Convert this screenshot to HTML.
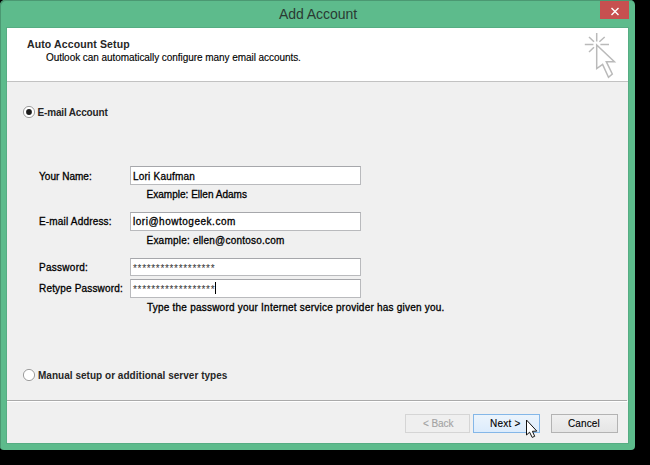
<!DOCTYPE html>
<html><head><meta charset="utf-8">
<style>
html,body{margin:0;padding:0;background:#000;}
body{width:650px;height:465px;position:relative;overflow:hidden;font-family:"Liberation Sans",sans-serif;}
.a{position:absolute;white-space:pre;-webkit-text-stroke:0.3px currentColor;}
.bd{-webkit-text-stroke:0;}
.lt{-webkit-text-stroke:0.12px currentColor;}
.r{position:absolute;}
#win{left:0;top:0;width:635px;height:450px;background:#5dbb8c;border-radius:5px 5px 4px 4px;box-shadow:inset 1px 1px 0 #4b9872;}
#topline{left:2px;top:0;width:630px;height:1px;background:#4b9872;}
#leftline{left:0;top:2px;width:1px;height:446px;background:#4b9872;}
#close{left:600px;top:1px;width:29px;height:18px;background:#c75050;}
#clientborder{left:6px;top:27px;width:623px;height:417px;background:#56ad83;}
#client{left:7px;top:28px;width:621px;height:415px;background:#f0f0f0;}
#header{left:7px;top:28px;width:621px;height:53px;background:#fff;}
#hline{left:7px;top:81px;width:621px;height:1px;background:#c2c2c2;}
#fline{left:7px;top:400px;width:620px;height:1px;background:#aaaaaa;}
#fline2{left:7px;top:401px;width:621px;height:1px;background:#fff;}
.box{position:absolute;left:130px;width:228.5px;height:16px;background:#fff;border:1px solid #b9babd;border-top-color:#a6a7ab;}
.btn{position:absolute;top:414px;height:17px;border:1px solid #b3b3b3;background:#e5e5e5;}
</style></head>
<body>
<div class="r" id="win"></div>
<div class="r" id="close"><svg width="29" height="18" style="position:absolute;left:0;top:0"><path d="M11.5 7 L18.5 14 M18.5 7 L11.5 14" stroke="#fff" stroke-width="1.4"/></svg></div>
<div class="r" id="clientborder"></div>
<div class="r" id="client"></div>
<div class="r" id="header"></div>
<div class="r" id="hline"></div>
<svg style="position:absolute;left:580px;top:30px" width="40" height="50" viewBox="0 0 40 50">
<g stroke="#bababa" stroke-width="1.5" fill="none">
<path d="M16.7 3 V11.5 M4.8 14.5 H13.4 M20.4 14.5 H29 M9 7 L14 11.8 M24.7 7 L19.4 11.8 M14 17.2 L9 22"/>
<path d="M16.7 15 V38.5 L22.6 34.4 L28.5 47.3 L32.3 44 L26.3 31.7 L34.4 31.7 Z" stroke-linejoin="miter"/>
</g></svg>
<svg style="position:absolute;left:22px;top:105px" width="14" height="14" viewBox="0 0 14 14">
<circle cx="7" cy="7" r="5.6" fill="#fff" stroke="#939393" stroke-width="0.9"/>
<circle cx="7" cy="7" r="2.9" fill="#1c1c1c"/>
</svg>
<div class="box" style="top:166px;height:17px"></div>
<div class="box" style="top:212px;height:17px"></div>
<div class="box" style="top:258px;height:16px"></div>
<div class="box" style="top:279px;height:16.5px"></div>
<div class="r" style="left:215px;top:282px;width:1px;height:12px;background:#000"></div>
<svg style="position:absolute;left:22px;top:368px" width="14" height="14" viewBox="0 0 14 14">
<circle cx="7" cy="7" r="5.6" fill="#fff" stroke="#939393" stroke-width="0.9"/>
</svg>
<div class="r" id="fline"></div>
<div class="r" id="fline2"></div>
<div class="btn" style="left:405px;width:63px;border-color:#d5d5d5;background:#efefef;"></div>
<div class="btn" style="left:473px;width:65px;border-color:#84b7e8;background:linear-gradient(#ecf4fc,#dcecfc);"></div>
<div class="btn" style="left:551px;width:65px;background:linear-gradient(#f0f0f0,#e5e5e5);"></div>
<div class="a bd" style="left:279px;top:7px;font-size:14px;line-height:14px;font-weight:400;letter-spacing:-0.05px;color:#2a3a33">Add Account</div>
<div class="a bd" style="left:27px;top:39px;font-size:10.5px;line-height:10.5px;font-weight:700;letter-spacing:0.124px;color:#262626">Auto Account Setup</div>
<div class="a lt" style="left:46px;top:53px;font-size:10px;line-height:10px;font-weight:400;letter-spacing:-0.055px;color:#000">Outlook can automatically configure many email accounts.</div>
<div class="a bd" style="left:37.5px;top:108px;font-size:10px;line-height:10px;font-weight:700;letter-spacing:-0.17px;color:#262626">E-mail Account</div>
<div class="a" style="left:39px;top:172px;font-size:10px;line-height:10px;font-weight:400;letter-spacing:0.033px;color:#000">Your Name:</div>
<div class="a" style="left:133px;top:172px;font-size:10px;line-height:10px;font-weight:400;letter-spacing:0.209px;color:#000">Lori Kaufman</div>
<div class="a" style="left:146.5px;top:190px;font-size:10px;line-height:10px;font-weight:400;letter-spacing:0.021px;color:#000">Example: Ellen Adams</div>
<div class="a" style="left:39px;top:217px;font-size:10px;line-height:10px;font-weight:400;letter-spacing:0.179px;color:#000">E-mail Address:</div>
<div class="a" style="left:133px;top:217px;font-size:10px;line-height:10px;font-weight:400;letter-spacing:0.518px;color:#000">lori@howtogeek.com</div>
<div class="a" style="left:146.5px;top:236px;font-size:10px;line-height:10px;font-weight:400;letter-spacing:0.216px;color:#000">Example: ellen@contoso.com</div>
<div class="a" style="left:39px;top:263px;font-size:10px;line-height:10px;font-weight:400;letter-spacing:0.275px;color:#000">Password:</div>
<div class="a bd" style="left:133px;top:264px;font-size:10px;line-height:10px;font-weight:400;letter-spacing:0.676px;color:#333">******************</div>
<div class="a" style="left:39px;top:284px;font-size:10px;line-height:10px;font-weight:400;letter-spacing:0.173px;color:#000">Retype Password:</div>
<div class="a bd" style="left:133px;top:285px;font-size:10px;line-height:10px;font-weight:400;letter-spacing:0.676px;color:#333">******************</div>
<div class="a" style="left:147px;top:303px;font-size:10px;line-height:10px;font-weight:400;letter-spacing:0.224px;color:#000">Type the password your Internet service provider has given you.</div>
<div class="a bd" style="left:38px;top:371px;font-size:10px;line-height:10px;font-weight:700;letter-spacing:0.026px;color:#262626">Manual setup or additional server types</div>
<div class="a lt" style="left:423px;top:419px;font-size:10px;line-height:10px;font-weight:400;letter-spacing:-0.06px;color:#a3a3a3">&lt; Back</div>
<div class="a lt" style="left:490px;top:419px;font-size:10px;line-height:10px;font-weight:400;letter-spacing:0.24px;color:#000">Next &gt;</div>
<div class="a lt" style="left:568px;top:419px;font-size:10px;line-height:10px;font-weight:400;letter-spacing:0.1px;color:#000">Cancel</div>

<svg style="position:absolute;left:520px;top:414px" width="24" height="28" viewBox="0 0 24 28">
<path d="M6.5 6 L6.5 21 L9.6 18.2 L12.2 23.4 L14.7 22.3 L12.4 17.3 L16.8 17.1 Z" fill="#fff" stroke="#111" stroke-width="1" stroke-linejoin="round"/>
</svg>
</body></html>
